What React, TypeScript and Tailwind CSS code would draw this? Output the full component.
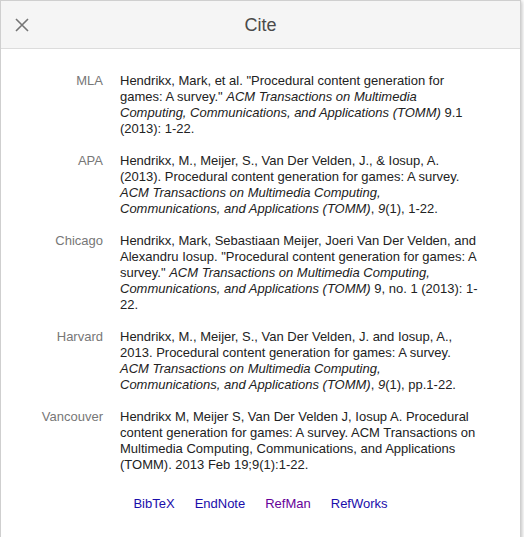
import React from "react";

const rows: { label: string; body: React.ReactNode }[] = [
  {
    label: "MLA",
    body: (
      <>
        Hendrikx, Mark, et al. "Procedural content generation for games: A survey."{" "}
        <i>ACM Transactions on Multimedia Computing, Communications, and Applications (TOMM)</i> 9.1 (2013): 1-22.
      </>
    ),
  },
  {
    label: "APA",
    body: (
      <>
        Hendrikx, M., Meijer, S., Van Der Velden, J., &amp; Iosup, A. (2013). Procedural content generation for games: A survey.{" "}
        <i>ACM Transactions on Multimedia Computing, Communications, and Applications (TOMM)</i>, <i>9</i>(1), 1-22.
      </>
    ),
  },
  {
    label: "Chicago",
    body: (
      <>
        Hendrikx, Mark, Sebastiaan Meijer, Joeri Van Der Velden, and Alexandru Iosup. "Procedural content generation for games: A survey."{" "}
        <i>ACM Transactions on Multimedia Computing, Communications, and Applications (TOMM)</i> 9, no. 1 (2013): 1-22.
      </>
    ),
  },
  {
    label: "Harvard",
    body: (
      <>
        Hendrikx, M., Meijer, S., Van Der Velden, J. and Iosup, A., 2013. Procedural content generation for games: A survey.{" "}
        <i>ACM Transactions on Multimedia Computing, Communications, and Applications (TOMM)</i>, <i>9</i>(1), pp.1-22.
      </>
    ),
  },
  {
    label: "Vancouver",
    body: (
      <>
        Hendrikx M, Meijer S, Van Der Velden J, Iosup A. Procedural content generation for games: A survey. ACM Transactions on Multimedia Computing, Communications, and Applications (TOMM). 2013 Feb 19;9(1):1-22.
      </>
    ),
  },
];

export default function App() {
  return (
    <div className="w-[524px] h-[537px] overflow-hidden bg-white" style={{ fontFamily: '"Liberation Sans", Arial, sans-serif' }}>
      <div className="w-[521px] h-[600px] border border-[#cfcfcf] bg-white shadow-[1px_1px_4px_rgba(0,0,0,0.25)]">
        <div className="relative h-[48px] bg-[#f5f5f5] border-b border-[#dcdcdc] flex items-center justify-center">
          <button className="absolute left-[13px] top-[16px] w-[16px] h-[16px] flex items-center justify-center">
            <svg width="16" height="16" viewBox="0 0 16 16">
              <path d="M2 2L14 14M14 2L2 14" stroke="#757575" strokeWidth="1.6" fill="none" />
            </svg>
          </button>
          <span className="text-[18px] leading-[22px] text-[#4a4a4a]">Cite</span>
        </div>
        <div className="pt-[24px]">
          {rows.map((r) => (
            <div key={r.label} className="flex pb-[16px]">
              <div className="w-[102px] shrink-0 text-right text-[13px] leading-[16px] text-[#777777]">{r.label}</div>
              <div className="ml-[17px] w-[358px] text-[13px] leading-[16px] text-[#222222]">{r.body}</div>
            </div>
          ))}
          <div className="flex justify-center gap-[20px] pt-[7px] text-[13px] leading-[16px]">
            <a className="text-[#1a0dab]">BibTeX</a>
            <a className="text-[#1a0dab]">EndNote</a>
            <a className="text-[#660099]">RefMan</a>
            <a className="text-[#1a0dab]">RefWorks</a>
          </div>
        </div>
      </div>
    </div>
  );
}
